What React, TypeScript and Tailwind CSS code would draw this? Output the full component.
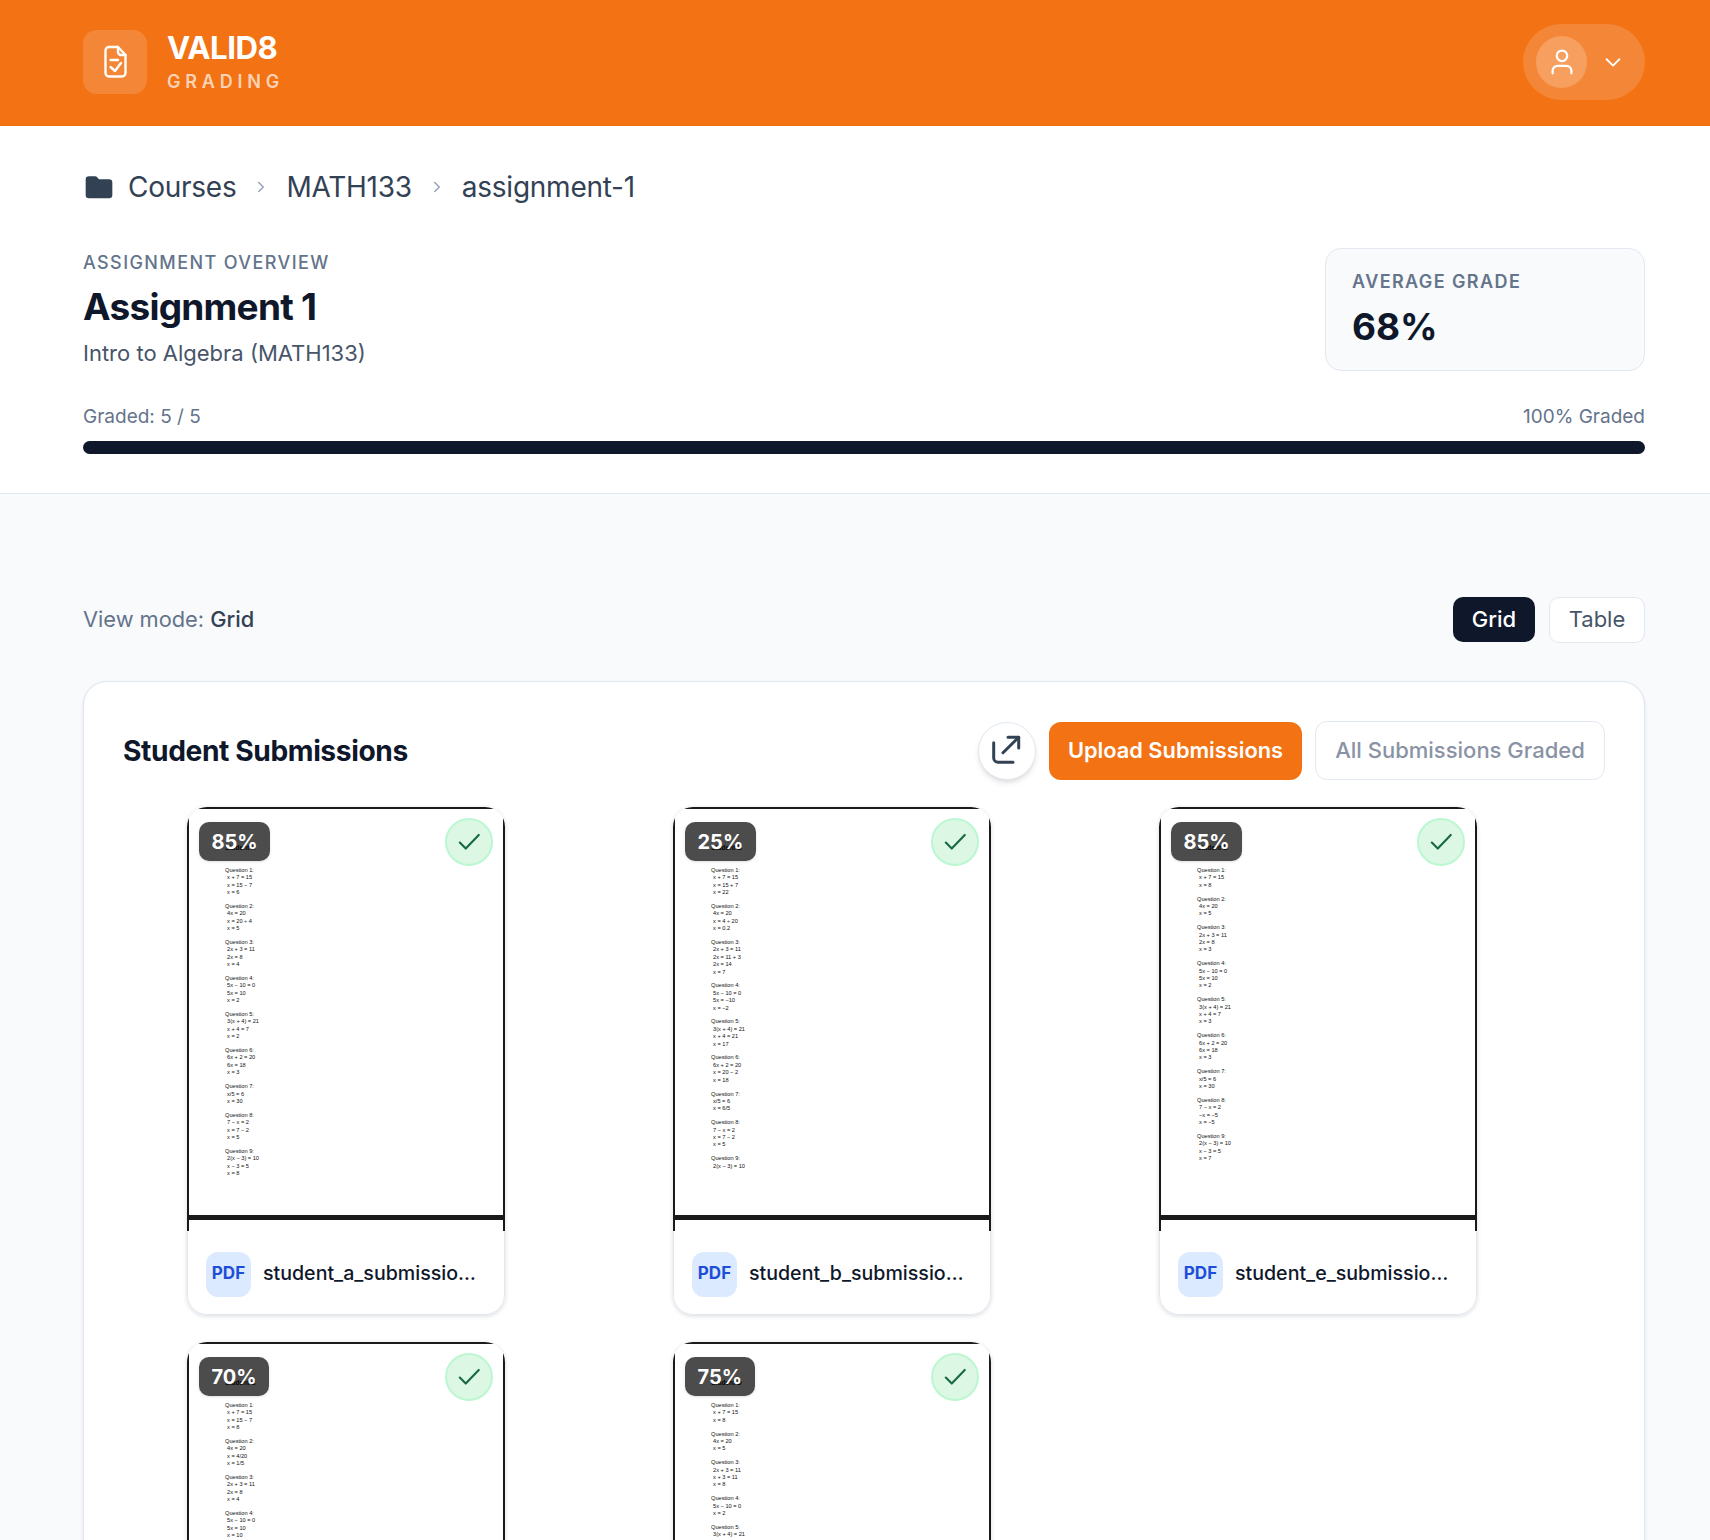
import React from "react";

type Sub = { pct: string; name: string; title: string; doc: string[][] };

const subs: Sub[] = [
  {
    pct: "85%", name: "student_a_submission.pdf", title: "Student A",
    doc: [
      ["x + 7 = 15", "x = 15 − 7", "x = 6"],
      ["4x = 20", "x = 20 ÷ 4", "x = 5"],
      ["2x + 3 = 11", "2x = 8", "x = 4"],
      ["5x − 10 = 0", "5x = 10", "x = 2"],
      ["3(x + 4) = 21", "x + 4 = 7", "x = 2"],
      ["6x + 2 = 20", "6x = 18", "x = 3"],
      ["x/5 = 6", "x = 30"],
      ["7 − x = 2", "x = 7 − 2", "x = 5"],
      ["2(x − 3) = 10", "x − 3 = 5", "x = 8"],
    ],
  },
  {
    pct: "25%", name: "student_b_submission.pdf", title: "Student B",
    doc: [
      ["x + 7 = 15", "x = 15 + 7", "x = 22"],
      ["4x = 20", "x = 4 ÷ 20", "x = 0.2"],
      ["2x + 3 = 11", "2x = 11 + 3", "2x = 14", "x = 7"],
      ["5x − 10 = 0", "5x = −10", "x = −2"],
      ["3(x + 4) = 21", "x + 4 = 21", "x = 17"],
      ["6x + 2 = 20", "x = 20 − 2", "x = 18"],
      ["x/5 = 6", "x = 6/5"],
      ["7 − x = 2", "x = 7 − 2", "x = 5"],
      ["2(x − 3) = 10"],
    ],
  },
  {
    pct: "85%", name: "student_e_submission.pdf", title: "Student E",
    doc: [
      ["x + 7 = 15", "x = 8"],
      ["4x = 20", "x = 5"],
      ["2x + 3 = 11", "2x = 8", "x = 3"],
      ["5x − 10 = 0", "5x = 10", "x = 2"],
      ["3(x + 4) = 21", "x + 4 = 7", "x = 3"],
      ["6x + 2 = 20", "6x = 18", "x = 3"],
      ["x/5 = 6", "x = 30"],
      ["7 − x = 2", "−x = −5", "x = −5"],
      ["2(x − 3) = 10", "x − 3 = 5", "x = 7"],
    ],
  },
  {
    pct: "70%", name: "student_c_submission.pdf", title: "Student C",
    doc: [
      ["x + 7 = 15", "x = 15 − 7", "x = 8"],
      ["4x = 20", "x = 4/20", "x = 1/5"],
      ["2x + 3 = 11", "2x = 8", "x = 4"],
      ["5x − 10 = 0", "5x = 10", "x = 10"],
    ],
  },
  {
    pct: "75%", name: "student_d_submission.pdf", title: "Student D",
    doc: [
      ["x + 7 = 15", "x = 8"],
      ["4x = 20", "x = 5"],
      ["2x + 3 = 11", "x + 3 = 11", "x = 8"],
      ["5x − 10 = 0", "x = 2"],
      ["3(x + 4) = 21", "x + 4 = 21"],
    ],
  },
];

function SubmissionCard({ s }: { s: Sub }) {
  return (
    <div className="w-[318px] h-[508px] rounded-[20px] bg-white shadow-[0_1px_4px_rgba(15,23,42,0.16)] overflow-hidden flex flex-col">
      <div className="relative h-[424px] shrink-0 border-x-2 border-t-2 border-[#1a1a1a] overflow-hidden">
        <div className="h-[411px] border-b-[5px] border-[#1a1a1a] pl-[36px] pt-[35px] font-['Liberation_Sans',Arial,sans-serif] text-[5.65px] leading-[7.4px] text-[#111]">
          <div className="h-[23px] text-[6.5px] font-bold">{s.title}</div>
          {s.doc.map((lines, i) => (
            <div key={i} className="mb-[6.4px]">
              <div>Question {i + 1}:</div>
              {lines.map((l, j) => (
                <div key={j} className="pl-[2px]">{l}</div>
              ))}
            </div>
          ))}
        </div>
        <div className="absolute left-[10px] top-[13px] h-[39px] rounded-[10px] bg-black/70 px-[12.5px] flex items-center text-white text-[20px] font-bold shadow-sm">
          {s.pct}
        </div>
        <div className="absolute right-[10px] top-[9px] w-[48px] h-[48px] rounded-full bg-[#dcf7e3] border-2 border-[#bbf7d0] flex items-center justify-center">
          <svg width="26" height="26" viewBox="0 0 24 24" fill="none" stroke="#1a6b45" strokeWidth="2" strokeLinecap="round" strokeLinejoin="round">
            <path d="M3.5 12.5l5.5 5.5L21 5.5" />
          </svg>
        </div>
      </div>
      <div className="flex-1 flex items-center gap-3 pl-[18px] pr-[18px] pt-[3px] min-w-0 border-x border-b border-[#e2e8f0] rounded-b-[20px]">
        <div className="w-[45px] h-[45px] shrink-0 rounded-[12px] bg-[#dbeafe] text-[#1d4ed8] text-[17px] font-bold flex items-center justify-center">PDF</div>
        <div className="truncate min-w-0 text-[19.6px] font-medium text-[#0f172a]">{s.name}</div>
      </div>
    </div>
  );
}

export default function App() {
  return (
    <div className="h-[1540px] overflow-hidden bg-[#f8fafc] font-['Inter',sans-serif]">
      <header className="h-[126px] bg-[#f37214] pl-[83px] pr-[65px] pb-[2px] flex items-center justify-between">
        <div className="flex items-center gap-5">
          <div className="w-[64px] h-[64px] rounded-[14px] bg-white/15">
            <svg width="64" height="64" viewBox="0 0 64 64" fill="none" stroke="white" strokeWidth="2.4" strokeLinecap="round" strokeLinejoin="round">
              <path d="M35 17H26a3.5 3.5 0 0 0-3.5 3.5V43a3.5 3.5 0 0 0 3.5 3.5h13a3.5 3.5 0 0 0 3.5-3.5V25z" />
              <path d="M35 17v5a3 3 0 0 0 3 3h4.5" />
              <path d="M27.5 30h7.5" />
              <path d="M27.5 37l4.5 4 6-8" />
            </svg>
          </div>
          <div>
            <div className="text-[31.2px] leading-[36px] font-bold text-white tracking-[-0.5px]">VALID8</div>
            <div className="mt-[4px] text-[18px] leading-[24px] font-semibold text-white/70 tracking-[4.8px]">GRADING</div>
          </div>
        </div>
        <div className="w-[122px] h-[76px] rounded-full bg-white/15 flex items-center pl-[13px]">
          <div className="w-[51px] h-[52px] rounded-full bg-white/20 flex items-center justify-center">
            <svg width="30" height="30" viewBox="0 0 24 24" fill="none" stroke="white" strokeWidth="1.8" strokeLinecap="round" strokeLinejoin="round">
              <circle cx="12" cy="7" r="4.2" />
              <path d="M4.5 21v-2a4 4 0 0 1 4-4h7a4 4 0 0 1 4 4v2" />
            </svg>
          </div>
          <svg className="ml-[15px]" width="22" height="22" viewBox="0 0 24 24" fill="none" stroke="white" strokeWidth="2" strokeLinecap="round" strokeLinejoin="round">
            <path d="M5 9l7 7 7-7" />
          </svg>
        </div>
      </header>

      <section className="h-[368px] bg-white border-b border-[#e2e8f0] pl-[83px] pr-[65px] pt-[40px]">
        <div className="h-[42px] flex items-center text-[#334155] text-[28px] tracking-[-0.25px]">
          <svg className="mr-[13px]" width="32" height="32" viewBox="0 0 24 24" fill="#334155">
            <path d="M2 6.5A2.5 2.5 0 0 1 4.5 4h4.6a2 2 0 0 1 1.5.7L12 6.2h7.5A2.5 2.5 0 0 1 22 8.7v9.3a2.5 2.5 0 0 1-2.5 2.5h-15A2.5 2.5 0 0 1 2 18z" />
          </svg>
          <span>Courses</span>
          <svg className="mx-[16px]" width="18" height="18" viewBox="0 0 24 24" fill="none" stroke="#94a3b8" strokeWidth="2" strokeLinecap="round" strokeLinejoin="round"><path d="M9 6l6 6-6 6" /></svg>
          <span>MATH133</span>
          <svg className="mx-[16px]" width="18" height="18" viewBox="0 0 24 24" fill="none" stroke="#94a3b8" strokeWidth="2" strokeLinecap="round" strokeLinejoin="round"><path d="M9 6l6 6-6 6" /></svg>
          <span>assignment-1</span>
        </div>
        <div className="mt-[40px] flex items-start justify-between">
          <div className="pt-[2px]">
            <div className="text-[18px] leading-[26px] font-medium tracking-[1.4px] text-[#64748b]">ASSIGNMENT OVERVIEW</div>
            <div className="mt-[7px] text-[37px] leading-[48px] font-bold text-[#0f172a] tracking-[-0.75px]">Assignment 1</div>
            <div className="mt-[6px] text-[22px] leading-[32px] text-[#475569]">Intro to Algebra (MATH133)</div>
          </div>
          <div className="w-[320px] h-[123px] rounded-[16px] bg-[#f8fafc] border border-[#e2e8f0] px-[26px] pt-[20px]">
            <div className="text-[18px] leading-[26px] font-semibold tracking-[1.4px] text-[#64748b]">AVERAGE GRADE</div>
            <div className="mt-[6px] text-[37px] leading-[52px] font-bold text-[#0f172a]">68%</div>
          </div>
        </div>
        <div className="mt-[33px] flex justify-between text-[19px] leading-[26px] text-[#64748b]">
          <span>Graded: 5 / 5</span>
          <span>100% Graded</span>
        </div>
        <div className="mt-[11px] h-[13px] rounded-full bg-[#0f172a]" />
      </section>

      <main className="pl-[83px] pr-[65px]">
        <div className="h-[187px] flex items-center justify-between pt-[64px]">
          <div className="text-[21.8px] text-[#64748b]">View mode: <span className="font-medium text-[#334155]">Grid</span></div>
          <div className="flex gap-[14px]">
            <button className="w-[82px] h-[45px] rounded-[10px] bg-[#0f172a] text-white text-[22px] font-medium">Grid</button>
            <button className="w-[96px] h-[46px] rounded-[10px] bg-white border border-[#e2e8f0] text-[#475569] text-[22px]">Table</button>
          </div>
        </div>
        <div className="h-[900px] rounded-[24px] bg-white border border-[#e2e8f0] shadow-sm px-[39px]">
          <div className="h-[125px] pt-[39px] flex items-start justify-between">
            <h2 className="h-[58px] mt-[1px] flex items-center text-[28.2px] font-bold text-[#0f172a] tracking-[-0.4px]">Student Submissions</h2>
            <div className="flex items-center gap-[13px]">
              <button className="w-[58px] h-[58px] rounded-full bg-white border border-[#e2e8f0] shadow-md flex items-center justify-center">
                <svg width="56" height="56" viewBox="2 3 56 56" fill="none" stroke="#334155" strokeWidth="3" strokeLinecap="round" strokeLinejoin="round">
                  <path d="M16.7 22.7V38a4.3 4.3 0 0 0 4.3 4.3h15" />
                  <path d="M26 32.7L41.7 17.3" />
                  <path d="M31 17.3h10.7V28" />
                </svg>
              </button>
              <button className="w-[253px] h-[58px] rounded-[12px] bg-[#f37214] text-white text-[21.8px] font-semibold">Upload Submissions</button>
              <button className="w-[290px] h-[59px] rounded-[12px] bg-white border border-[#e2e8f0] text-[#8a93a5] text-[22px] font-medium">All Submissions Graded</button>
            </div>
          </div>
          <div className="pl-[64px] grid grid-cols-[repeat(3,318px)] gap-x-[168px] gap-y-[27px]">
            {subs.map((s, i) => (
              <SubmissionCard key={i} s={s} />
            ))}
          </div>
        </div>
      </main>
    </div>
  );
}
